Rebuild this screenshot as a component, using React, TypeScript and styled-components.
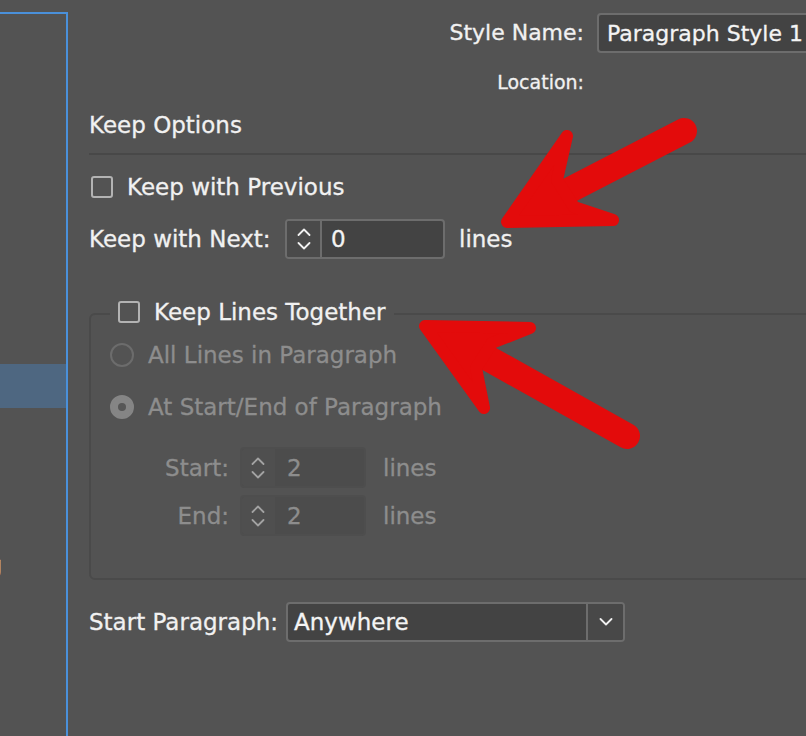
import React from "react";
import styled, { createGlobalStyle } from "styled-components";

const Global = createGlobalStyle`
  html, body { margin: 0; padding: 0; background: #535353; overflow: hidden; }
  body {
    font-family: "DejaVu Sans", "Liberation Sans", sans-serif;
    color: #f1f1f1;
    -webkit-text-stroke: 0.3px currentColor;
  }
  * { box-sizing: border-box; }
`;

const Page = styled.div`
  position: relative;
  display: flex;
  width: 806px;
  height: 736px;
  overflow: hidden;
  background: #535353;
`;

const Sidebar = styled.nav`
  flex: 0 0 68px;
  margin-top: 12px;
  border-top: 2px solid #4a90da;
  border-right: 2px solid #4a90da;
  overflow: hidden;
  padding-top: 6px;
`;

const SideItem = styled.div<{ $selected?: boolean }>`
  height: ${(p) => (p.$selected ? 44 : 43)}px;
  display: flex;
  align-items: center;
  background: ${(p) => (p.$selected ? "#4e6781" : "transparent")};
`;

const SideLabel = styled.span`
  flex: 0 0 280px;
  margin-left: -278px;
  margin-top: 12px;
  text-align: right;
  white-space: nowrap;
  font-size: 23px;
  color: #f1f1f1;
`;

const Main = styled.main`
  flex: 0 0 780px;
  padding: 13px 0 0 21px;
  display: flex;
  flex-direction: column;
`;

const HeaderGrid = styled.div`
  display: grid;
  grid-template-columns: 495px 1fr;
  column-gap: 13px;
  row-gap: 18px;
  align-items: center;
`;

const HeaderLabel = styled.label<{ $size: number }>`
  font-size: ${(p) => p.$size}px;
  line-height: ${(p) => Math.round(p.$size * 1.2)}px;
  text-align: right;
  white-space: nowrap;
  color: #f1f1f1;
`;

const TextField = styled.div`
  height: 40px;
  border: 2px solid #6d6d6d;
  border-radius: 4px;
  background: #434343;
  padding-left: 8px;
  display: flex;
  align-items: center;
  font-size: 22px;
  color: #f4f4f4;
  white-space: nowrap;
  overflow: hidden;
`;

const SectionTitle = styled.h2`
  margin: 17px 0 0 0;
  font-size: 23px;
  line-height: 28px;
  font-weight: normal;
  color: #f1f1f1;
`;

const Divider = styled.hr`
  margin: 14px 0 0 0;
  height: 2px;
  border: none;
  background: #484848;
`;

const CheckRow = styled.label<{ $mt?: number }>`
  display: flex;
  align-items: center;
  gap: 14px;
  height: 28px;
  margin-top: ${(p) => p.$mt ?? 0}px;
  padding-left: 2px;
  font-size: 23px;
  color: #f1f1f1;
  white-space: nowrap;
`;

const CheckBox = styled.span`
  flex: 0 0 22px;
  height: 22px;
  border: 2px solid #b3b3b3;
  border-radius: 3px;
`;

const FieldRow = styled.div<{ $mt: number }>`
  display: flex;
  align-items: center;
  margin-top: ${(p) => p.$mt}px;
  font-size: 23px;
  white-space: nowrap;
`;

const FieldLabel = styled.label<{ $w: number; $muted?: boolean; $right?: boolean }>`
  flex: 0 0 ${(p) => p.$w}px;
  text-align: ${(p) => (p.$right ? "right" : "left")};
  color: ${(p) => (p.$muted ? "#8d8d8d" : "#f1f1f1")};
  white-space: nowrap;
`;

const Unit = styled.span<{ $muted?: boolean; $ml: number }>`
  margin-left: ${(p) => p.$ml}px;
  color: ${(p) => (p.$muted ? "#8d8d8d" : "#f1f1f1")};
`;

const Spinner = styled.div<{ $disabled?: boolean; $w: number; $h: number }>`
  flex: 0 0 ${(p) => p.$w}px;
  height: ${(p) => p.$h}px;
  display: flex;
  border: 2px solid ${(p) => (p.$disabled ? "#4e4e4e" : "#6d6d6d")};
  border-radius: 4px;
  overflow: hidden;
  background: ${(p) => (p.$disabled ? "#4c4c4c" : "#434343")};
`;

const StepButtons = styled.div<{ $disabled?: boolean }>`
  flex: 0 0 ${(p) => (p.$disabled ? 33 : 35)}px;
  display: flex;
  flex-direction: column;
  align-items: center;
  justify-content: center;
  gap: 6px;
  background: ${(p) => (p.$disabled ? "#4f4f4f" : "#4a4a4a")};
  border-right: 2px solid ${(p) => (p.$disabled ? "#4f4f4f" : "#6d6d6d")};
`;

const SpinValue = styled.span<{ $disabled?: boolean }>`
  display: flex;
  align-items: center;
  padding-left: ${(p) => (p.$disabled ? 12 : 9)}px;
  font-size: 23px;
  color: ${(p) => (p.$disabled ? "#8d8d8d" : "#f4f4f4")};
`;

const Group = styled.fieldset`
  margin: 39px 0 0 0;
  padding: 12px 0 42px 19px;
  border: 2px solid #4a4a4a;
  border-radius: 6px;
  min-width: 0;
`;

const GroupLegend = styled.legend`
  padding: 0 8px;
  font-size: 23px;
  line-height: 28px;
`;

const LegendCheck = styled.label`
  display: inline-flex;
  align-items: center;
  gap: 14px;
  color: #f1f1f1;
  white-space: nowrap;
`;

const RadioRow = styled.label<{ $mt?: number }>`
  display: flex;
  align-items: center;
  gap: 14px;
  height: 28px;
  margin-top: ${(p) => p.$mt ?? 0}px;
  font-size: 23px;
  color: #8d8d8d;
  white-space: nowrap;
`;

const RadioCircle = styled.span<{ $checked?: boolean }>`
  flex: 0 0 24px;
  height: 24px;
  border-radius: 50%;
  border: 2px solid ${(p) => (p.$checked ? "#858585" : "#6c6c6c")};
  background: ${(p) => (p.$checked ? "#858585" : "transparent")};
  display: grid;
  place-items: center;
  &::after {
    content: "";
    width: 8px;
    height: 8px;
    border-radius: 50%;
    background: #575757;
    display: ${(p) => (p.$checked ? "block" : "none")};
  }
`;

const SubGrid = styled.div`
  margin-top: 26px;
  display: grid;
  grid-template-columns: 119px 126px auto;
  column-gap: 11px;
  row-gap: 7px;
  align-items: center;
  font-size: 23px;
`;

const Select = styled.div`
  flex: 0 0 339px;
  height: 40px;
  display: flex;
  border: 2px solid #6d6d6d;
  border-radius: 4px;
  background: #434343;
  overflow: hidden;
`;

const SelectValue = styled.span`
  flex: 1;
  display: flex;
  align-items: center;
  padding-left: 6px;
  font-size: 23px;
  color: #f4f4f4;
`;

const SelectButton = styled.span`
  flex: 0 0 37px;
  display: flex;
  align-items: center;
  justify-content: center;
  border-left: 2px solid #6d6d6d;
  background: #484848;
`;

const Overlay = styled.svg`
  position: absolute;
  left: 0;
  top: 0;
  pointer-events: none;
`;

const Chevron = ({ dir, color }: { dir: "up" | "down"; color: string }) => (
  <svg width="14" height="8" viewBox="0 0 14 8">
    <path
      d={dir === "up" ? "M1.5 7 L7 1.5 L12.5 7" : "M1.5 1 L7 6.5 L12.5 1"}
      fill="none"
      stroke={color}
      strokeWidth="1.8"
      strokeLinecap="round"
      strokeLinejoin="round"
    />
  </svg>
);

const NumberField = ({ value, disabled, w, h }: { value: string; disabled?: boolean; w: number; h: number }) => {
  const c = disabled ? "#a2a2a2" : "#f0f0f0";
  return (
    <Spinner $disabled={disabled} $w={w} $h={h}>
      <StepButtons $disabled={disabled}>
        <Chevron dir="up" color={c} />
        <Chevron dir="down" color={c} />
      </StepButtons>
      <SpinValue $disabled={disabled}>{value}</SpinValue>
    </Spinner>
  );
};

const RED = "#e30b0b";

export default function App() {
  return (
    <>
      <Global />
      <Page>
        <Sidebar>
          {Array.from({ length: 8 }).map((_, i) => (
            <SideItem key={i} />
          ))}
          <SideItem $selected />
          <SideItem />
          <SideItem />
          <SideItem />
          <SideItem>
            <SideLabel>Bullets and Numbering</SideLabel>
          </SideItem>
        </Sidebar>
        <Main>
          <HeaderGrid>
            <HeaderLabel $size={22}>Style Name:</HeaderLabel>
            <TextField>Paragraph Style 1</TextField>
            <HeaderLabel $size={19}>Location:</HeaderLabel>
            <span />
          </HeaderGrid>

          <SectionTitle>Keep Options</SectionTitle>
          <Divider />

          <CheckRow $mt={18}>
            <CheckBox />
            Keep with Previous
          </CheckRow>

          <FieldRow $mt={18}>
            <FieldLabel $w={196}>Keep with Next:</FieldLabel>
            <NumberField value="0" w={160} h={40} />
            <Unit $ml={14}>lines</Unit>
          </FieldRow>

          <Group>
            <GroupLegend>
              <LegendCheck>
                <CheckBox />
                Keep Lines Together
              </LegendCheck>
            </GroupLegend>
            <RadioRow>
              <RadioCircle />
              All Lines in Paragraph
            </RadioRow>
            <RadioRow $mt={24}>
              <RadioCircle $checked />
              At Start/End of Paragraph
            </RadioRow>
            <SubGrid>
              <FieldLabel $w={119} $muted $right>Start:</FieldLabel>
              <NumberField value="2" disabled w={126} h={41} />
              <Unit $muted $ml={6}>lines</Unit>
              <FieldLabel $w={119} $muted $right>End:</FieldLabel>
              <NumberField value="2" disabled w={126} h={41} />
              <Unit $muted $ml={6}>lines</Unit>
            </SubGrid>
          </Group>

          <FieldRow $mt={22}>
            <FieldLabel $w={197}>Start Paragraph:</FieldLabel>
            <Select>
              <SelectValue>Anywhere</SelectValue>
              <SelectButton>
                <Chevron dir="down" color="#f0f0f0" />
              </SelectButton>
            </Select>
          </FieldRow>
        </Main>

        <Overlay width="806" height="736" viewBox="0 0 806 736">
          <line x1="560" y1="195" x2="684" y2="131" stroke={RED} strokeWidth="26" strokeLinecap="round" />
          <path
            d="M507,222 L567,136 L557,180 L574,207 L613,220 Z"
            fill={RED}
            stroke={RED}
            strokeWidth="12"
            strokeLinejoin="round"
          />
          <line x1="484" y1="356" x2="627" y2="436" stroke={RED} strokeWidth="26" strokeLinecap="round" />
          <path
            d="M425,326 L530,328 L492,343 L476,368 L484,408 Z"
            fill={RED}
            stroke={RED}
            strokeWidth="12"
            strokeLinejoin="round"
          />
        </Overlay>
      </Page>
    </>
  );
}
